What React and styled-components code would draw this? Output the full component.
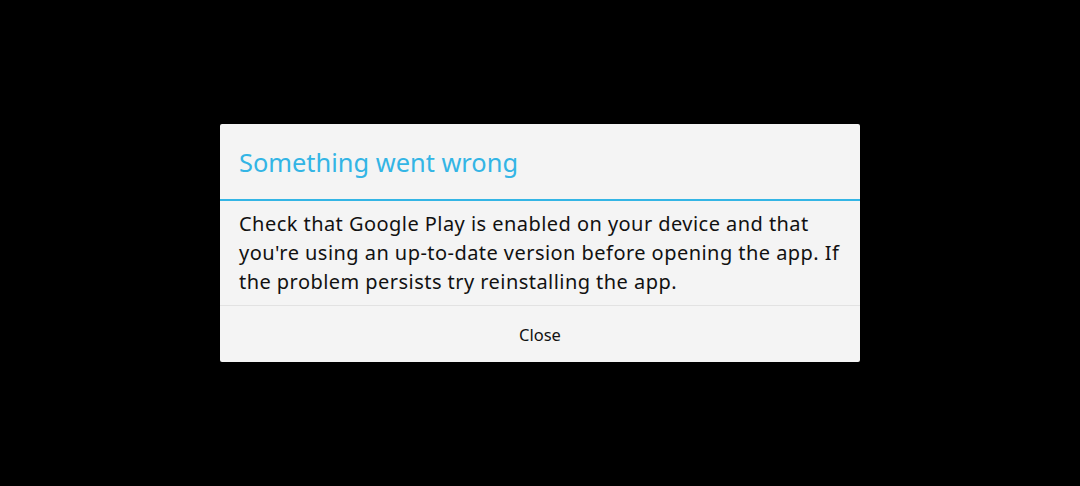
import React from 'react';
import styled, { createGlobalStyle } from 'styled-components';

const GlobalStyle = createGlobalStyle`
  html, body {
    margin: 0;
    padding: 0;
    background: #000;
  }
  body {
    font-family: 'Noto Sans', 'Open Sans', sans-serif;
  }
`;

const Screen = styled.div`
  width: 1080px;
  height: 486px;
  background: #000;
  display: flex;
  align-items: flex-start;
  justify-content: center;
  padding-top: 124px;
  box-sizing: border-box;
`;

const Dialog = styled.div`
  width: 640px;
  background: #f4f4f4;
  border-radius: 2px;
  display: flex;
  flex-direction: column;
`;

const Header = styled.div`
  height: 75px;
  padding: 0 19px;
  display: flex;
  align-items: center;
  border-bottom: 2px solid #33b5e5;
`;

const Title = styled.h1`
  margin: 0;
  font-size: 25.4px;
  font-weight: 400;
  color: #33b5e5;
  padding-top: 1px;
`;

const Body = styled.p`
  margin: 0;
  padding: 8px 19px 9px;
  font-size: 20px;
  letter-spacing: 0.45px;
  line-height: 29px;
  color: #111;
  border-bottom: 1px solid #e2e2e2;
`;

const Button = styled.button`
  height: 56px;
  border: none;
  background: transparent;
  font-family: inherit;
  font-size: 16.5px;
  color: #111;
  cursor: pointer;
`;

export default function App() {
  return (
    <>
      <GlobalStyle />
      <Screen>
        <Dialog>
          <Header>
            <Title>Something went wrong</Title>
          </Header>
          <Body>
            Check that Google Play is enabled on your device and that you're
            using an up-to-date version before opening the app. If the problem
            persists try reinstalling the app.
          </Body>
          <Button>Close</Button>
        </Dialog>
      </Screen>
    </>
  );
}
